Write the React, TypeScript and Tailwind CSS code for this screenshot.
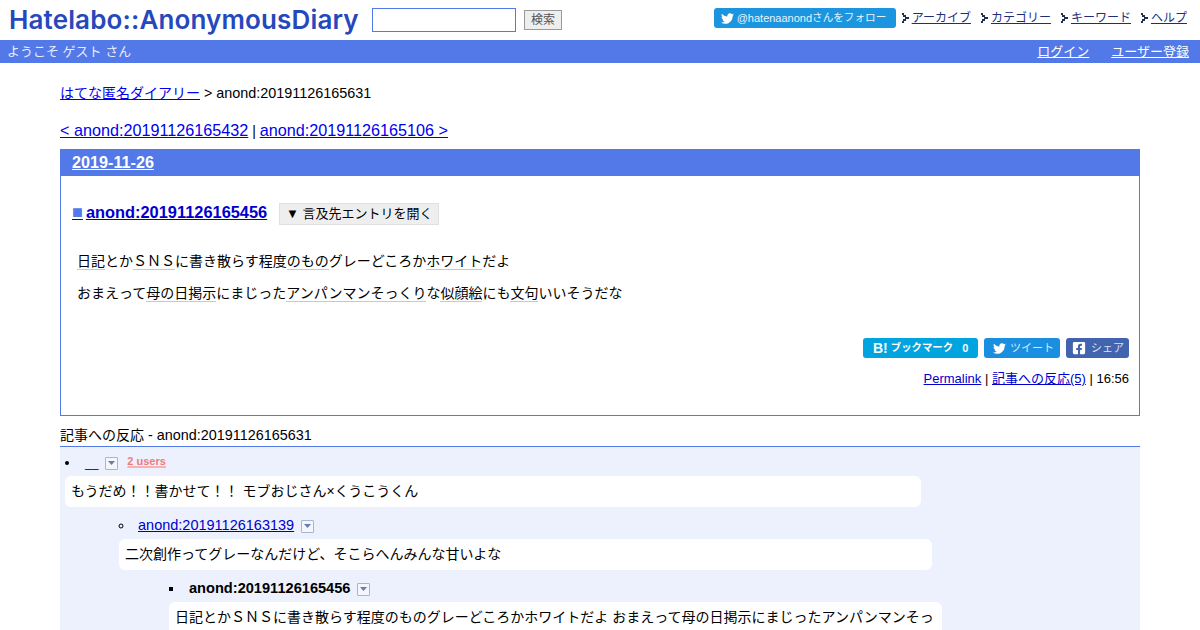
import type { ReactNode } from 'react'
import { FaTwitter, FaFacebookSquare } from 'react-icons/fa'

const sans = 'font-["Liberation_Sans","Noto_Sans_CJK_JP",sans-serif]'

function NavArrow() {
  return (
    <svg width="7" height="10" viewBox="0 0 7 10" className="mr-[3px] shrink-0">
      <path d="M0 0h2v2h2v2h3v2H4v2H2v2H0V8h1V6h2V4H1V2H0z" fill="#1f2f4f" />
    </svg>
  )
}

function MenuToggle() {
  return (
    <span className="inline-flex w-[13px] h-[13px] ml-[7px] items-center justify-center border border-[#a9b4cf] bg-[#f4f6fb] rounded-[1px] align-middle">
      <svg width="7" height="4" viewBox="0 0 7 4">
        <path d="M0 0h7L3.5 4z" fill="#5f7db8" />
      </svg>
    </span>
  )
}

function Keyword({ children }: { children: string }) {
  return <span className="border-b border-[#c8c8c8]">{children}</span>
}

// latin runs sit a bit larger than the kana around them
function Lat({ children }: { children: ReactNode }) {
  return <span className="text-[14.4px]">{children}</span>
}

function ShareButton({ className, children }: { className: string; children: ReactNode }) {
  return (
    <span className={`inline-flex items-center h-5 rounded-[3px] text-white text-[11px] ${className}`}>
      {children}
    </span>
  )
}

export default function App() {
  return (
    <div className={`h-[630px] overflow-hidden bg-white text-black text-[14px] ${sans}`}>
      <header className="h-10 flex items-start justify-between">
        <div className="flex items-center h-10">
          <div className="ml-[9px] w-[350px] font-['Inter',sans-serif] font-semibold text-[26px] leading-none tracking-[0.14px] text-[#2548bd] whitespace-nowrap">
            Hatelabo::AnonymousDiary
          </div>
          <input
            type="text"
            className="ml-[13px] w-[144px] h-6 border border-[#5279e7] bg-white"
          />
          <button className="ml-2 w-[38px] h-5 border border-[#999] bg-[#eeeeee] text-[12px] text-[#555]">
            検索
          </button>
        </div>
        <div className="flex items-center h-[20px] mt-2 text-[12px] text-[#1d2f7a] mr-[13px]">
          <span className="inline-flex items-center h-5 w-[182px] pl-[7px] mr-[6px] rounded-[3px] bg-[#1b95e0] text-[#e6f3fc] text-[11px]">
            <FaTwitter size={13} className="mr-[3px] text-white" />
            @hatenaanond<span className="text-[10.6px]">さんをフォロー</span>
          </span>
          <NavArrow />
          <a href="#" className="underline mr-[10px]">アーカイブ</a>
          <NavArrow />
          <a href="#" className="underline mr-[10px]">カテゴリー</a>
          <NavArrow />
          <a href="#" className="underline mr-[10px]">キーワード</a>
          <NavArrow />
          <a href="#" className="underline">ヘルプ</a>
        </div>
      </header>

      <div className="h-[23px] bg-[#5279e7] text-white text-[13px] flex items-center justify-between pl-[7px] pr-[11px]">
        <span className="text-[#e6ecfb]">ようこそ ゲスト さん</span>
        <div className="flex gap-[22px]">
          <a href="#" className="underline">ログイン</a>
          <a href="#" className="underline">ユーザー登録</a>
        </div>
      </div>

      <main className="mx-[60px]">
        <p className="mt-[20px] h-[18px] leading-[18px] pt-px">
          <a href="#" className="underline text-[#0000ee]">はてな匿名ダイアリー</a> <Lat>&gt; anond:20191126165631</Lat>
        </p>
        <p className="mt-[19px] h-[20px] leading-[20px] text-[16.2px]">
          <a href="#" className="underline text-[#0000ee]">&lt; anond:20191126165432</a>
          <span className="text-[14px]"> | </span>
          <a href="#" className="underline text-[#0000ee]">anond:20191126165106 &gt;</a>
        </p>

        <section className="mt-[9px] h-[267px] border border-[#5279e7] border-t-0">
          <h2 className="-mx-px h-[27px] bg-[#5279e7] pl-3 text-white text-[16.2px] font-bold leading-[27px] underline">
            2019-11-26
          </h2>
          <div className="flex items-center h-[22px] mt-[27px] pl-[11px]">
            <a href="#" className="underline text-[#0000cc] text-[16.4px] font-bold leading-none -mt-[4px]">
              <span className="text-[#5279e7] text-[18px] leading-none">■</span>
              <span className="ml-[3px]">anond:20191126165456</span>
            </a>
            <button className="ml-3 h-[22px] w-40 bg-[#eeeeee] border border-[#e0e0e0] text-[13px] text-black">
              ▼ 言及先エントリを開く
            </button>
          </div>
          <div className="pl-4 mt-[26px] leading-[20px]">
            <p>
              <Keyword>日記</Keyword>とか<Keyword>ＳＮＳ</Keyword>に書き散らす程度<Keyword>のもの</Keyword>グレーどころか<Keyword>ホワイト</Keyword>だよ
            </p>
            <p className="mt-3">
              おまえって<Keyword>母の日</Keyword><Keyword>掲示</Keyword>にまじった<Keyword>アンパンマン</Keyword><Keyword>そっくり</Keyword>な<Keyword>似顔絵</Keyword>にも<Keyword>文句</Keyword>いいそうだな
            </p>
          </div>
          <div className="flex justify-end gap-[6px] mt-[35px] pr-[10px]">
            <ShareButton className="w-[115px] bg-[#00a4de] pl-[10px] font-bold">
              <span className="text-[14px]">B!</span>
              <span className="ml-[3px] text-[10.4px]">ブックマーク</span>
              <span className="ml-[9px]">0</span>
            </ShareButton>
            <ShareButton className="w-[76px] bg-[#1b8fdf] pl-[9px]">
              <FaTwitter size={13} className="mr-[4px]" />
              <span className="text-[#d6ebfa]">ツイート</span>
            </ShareButton>
            <ShareButton className="w-[63px] bg-[#4263ad] pl-[6px]">
              <FaFacebookSquare size={14} className="mr-[5px]" />
              <span className="text-[#d9e0f0]">シェア</span>
            </ShareButton>
          </div>
          <p className="text-right pr-[10px] mt-[12px] text-[13px] leading-[18px]">
            <a href="#" className="underline text-[#0000cc]">Permalink</a> |{' '}
            <a href="#" className="underline text-[#0000cc]">記事への反応(5)</a> | 16:56
          </p>
        </section>

        <h3 className="mt-[10px] h-[21px] leading-[19px] border-b border-[#5279e7]">
          記事への反応 <Lat>- anond:20191126165631</Lat>
        </h3>
        <div className="bg-[#ecf1fd] pt-[7px] h-[300px]">
          <ul className="list-disc pl-5">
            <li>
              <div className="-mt-[2px] h-4 leading-4 pl-[5px]">
                <a href="#" className="text-[#0000cc] text-[12px]">__</a>
                <MenuToggle />
                <span className="relative -top-[2px] ml-[9px] text-[11px] font-bold text-[#f07a7a] underline decoration-[#f9b0b0] decoration-2">2 users</span>
              </div>
              <div className="-ml-[15px] mt-[6px] w-[856px] h-[31px] leading-[31px] rounded-[6px] bg-white pl-[6px]">
                もうだめ！！書かせて！！ モブおじさん×くうこうくん
              </div>
              <ul className="list-[circle] pl-[54px] mt-[10px]">
                <li>
                  <div className="-mt-[2px] h-4 leading-4 pl-[4px]">
                    <a href="#" className="underline text-[#0000cc] text-[14.5px]">anond:20191126163139</a>
                    <MenuToggle />
                  </div>
                  <div className="-ml-[15px] mt-[6px] w-[813px] h-[31px] leading-[31px] rounded-[6px] bg-white pl-[6px]">
                    二次創作ってグレーなんだけど、そこらへんみんな甘いよな
                  </div>
                  <ul className="list-[square] pl-[50px] mt-[10px]">
                    <li>
                      <div className="-mt-[2px] h-4 leading-4 pl-[5px] font-bold text-[14.6px]">
                        <span>anond:20191126165456</span>
                        <MenuToggle />
                      </div>
                      <div className="-ml-[15px] mt-[6px] w-[773px] leading-[21px] rounded-[6px] bg-white px-[6px] py-[5px]">
                        日記とかＳＮＳに書き散らす程度のものグレーどころかホワイトだよ おまえって母の日掲示にまじったアンパンマンそっくりな似顔絵にも文句いいそうだな
                      </div>
                    </li>
                  </ul>
                </li>
              </ul>
            </li>
          </ul>
        </div>
      </main>
    </div>
  )
}
